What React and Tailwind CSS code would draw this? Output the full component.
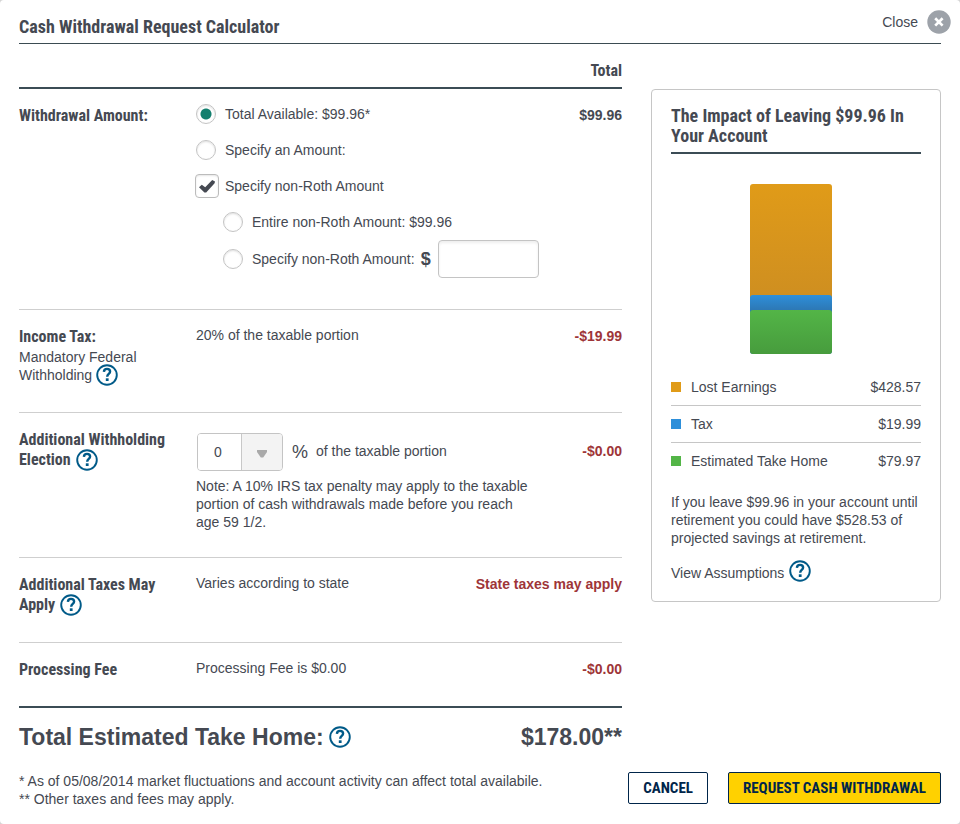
import React from "react";

const condensed = "font-['Roboto_Condensed','Arial_Narrow','Liberation_Sans_Narrow',sans-serif] font-bold";

function HelpButton({ topic, className = "" }) {
  return (
    <button type="button" aria-label={`Help: ${topic}`} className={`inline-block h-[22px] w-[22px] shrink-0 ${className}`}>
      <svg viewBox="0 0 22 22" className="h-full w-full" fill="none" stroke="#005a88">
        <circle cx="11" cy="11" r="9.8" strokeWidth="1.9" />
        <path d="M7.9 7.9C8 5.9 9.2 4.9 11 4.9c1.9 0 3.1 1 3.1 2.7 0 2.3-2.9 2.4-2.9 5.1" strokeWidth="2.4" />
        <path d="M11.2 14.3v2.7" strokeWidth="2.8" />
      </svg>
    </button>
  );
}

const radioStyle =
  "ml-px h-5 w-5 appearance-none rounded-full border border-[#c4c4c4] bg-white shadow-[inset_0_1px_2px_rgba(0,0,0,0.12)] checked:bg-[radial-gradient(circle,#137f6e_0_5px,#fff_6px)]";

function RadioOption({ name, children, defaultChecked, className = "" }) {
  return (
    <label className={`flex h-9 items-center ${className}`}>
      <span className="flex w-[30px] shrink-0">
        <input type="radio" name={name} defaultChecked={defaultChecked} className={radioStyle} />
      </span>
      <span>{children}</span>
    </label>
  );
}

function Row({ title, children, amount, negative = true, className = "border-b border-[#cfcfcf]" }) {
  return (
    <section className={`grid grid-cols-[176px_1fr_auto] ${className}`}>
      <div className="max-w-[160px] pt-[17px]">{title}</div>
      <div>{children}</div>
      <div className={`pt-4 text-right font-bold leading-5 ${negative ? "text-[#9e3538]" : ""}`}>{amount}</div>
    </section>
  );
}

function RowTitle({ children }) {
  return <h2 className={`${condensed} text-base leading-5`}>{children}</h2>;
}

const legend = [
  { label: "Lost Earnings", value: "$428.57", swatch: "bg-[#e09b18]" },
  { label: "Tax", value: "$19.99", swatch: "bg-[#2d8fda]" },
  { label: "Estimated Take Home", value: "$79.97", swatch: "bg-[#53b547]" },
];

export default function App() {
  return (
    <div className="min-h-screen bg-[#d4d4d4]">
      <div className="min-h-screen rounded bg-white px-[19px] pb-4 font-['Liberation_Sans',Arial,sans-serif] text-sm leading-[18px] text-[#454952]">
        <header className="flex h-11 items-center justify-between border-b border-[#3b4c52] pt-2">
          <h1 className={`${condensed} pt-[2px] text-lg leading-6`}>Cash Withdrawal Request Calculator</h1>
          <button type="button" className="-mr-[10px] mb-[7px] flex items-center gap-[9px]">
            Close
            <svg viewBox="0 0 24 24" className="h-6 w-6" aria-hidden="true">
              <circle cx="12" cy="12" r="11.7" fill="#9da2a9" />
              <path d="M8.2 8.2l7.4 7.4M15.6 8.2l-7.4 7.4" stroke="#fff" strokeWidth="2.7" />
            </svg>
          </button>
        </header>

        <main className="flex items-start gap-[29px]">
          <form className="min-w-0 flex-1">
            <div className={`${condensed} flex h-[45px] items-end justify-end border-b-2 border-[#3b4c55] pb-[6px] text-base leading-5`}>
              Total
            </div>

            <Row title={<RowTitle>Withdrawal Amount:</RowTitle>} amount="$99.96" negative={false} className="h-[221px] border-b border-[#cfcfcf]">
              <div className="pt-[7px]">
                <RadioOption name="amount" defaultChecked>Total Available: $99.96*</RadioOption>
                <RadioOption name="amount">Specify an Amount:</RadioOption>
                <label className="flex h-9 items-center">
                  <span className="grid w-[30px] shrink-0 items-center">
                    <input
                      type="checkbox"
                      defaultChecked
                      className="peer col-start-1 row-start-1 h-6 w-6 appearance-none rounded border border-[#bcbcbc] bg-white shadow-[inset_0_1px_2px_rgba(0,0,0,0.1)]"
                    />
                    <svg viewBox="0 0 24 24" className="pointer-events-none invisible col-start-1 row-start-1 h-6 w-6 peer-checked:visible" aria-hidden="true">
                      <path d="M4 13.2l2.8-2.4 3.4 2.4 7-7.2 2.8 1.4-.4 1.9-8.4 9.2h-1.8z" fill="#454952" />
                    </svg>
                  </span>
                  <span>Specify non-Roth Amount</span>
                </label>
                <RadioOption name="nonroth" className="pl-[27px]">Entire non-Roth Amount: $99.96</RadioOption>
                <div className="flex h-[38px] items-center">
                  <RadioOption name="nonroth" className="pl-[27px]">Specify non-Roth Amount:</RadioOption>
                  <label htmlFor="nonroth-value" className="pl-[6px] pr-[7px] text-lg font-bold">$</label>
                  <input
                    id="nonroth-value"
                    type="text"
                    className="h-[38px] w-[101px] rounded border border-[#c4c4c4] bg-white px-2 shadow-[inset_0_2px_3px_rgba(0,0,0,0.07)]"
                  />
                </div>
              </div>
            </Row>

            <Row
              title={
                <>
                  <RowTitle>Income Tax:</RowTitle>
                  <p className="pt-px">
                    Mandatory Federal
                    <span className="flex items-center gap-1">
                      Withholding <HelpButton topic="withholding" className="-my-[2px]" />
                    </span>
                  </p>
                </>
              }
              amount="-$19.99"
              className="h-[103px] border-b border-[#cfcfcf]"
            >
              <p className="pl-px pt-4">20% of the taxable portion</p>
            </Row>

            <Row
              title={
                <RowTitle>
                  Additional Withholding
                  <span className="flex h-5 items-center gap-[5px]">
                    Election <HelpButton topic="additional withholding" />
                  </span>
                </RowTitle>
              }
              amount={<span className="block pt-3">-$0.00</span>}
              className="h-[145px] border-b border-[#cfcfcf]"
            >
              <div className="flex items-center pl-[2px] pt-5">
                <div className="grid h-[38px] w-[86px] grid-cols-[44px_1fr] overflow-hidden rounded border border-[#c4c4c4]">
                  <select
                    aria-label="Additional withholding percentage"
                    className="col-span-2 col-start-1 row-start-1 appearance-none bg-[linear-gradient(90deg,#fff_43px,#c8c8c8_43px_44px,#f3f3f3_44px)] pl-4 pr-10"
                  >
                    <option>0</option>
                    <option>5</option>
                    <option>10</option>
                  </select>
                  <svg viewBox="0 0 12 8" className="pointer-events-none col-start-2 row-start-1 mt-1 h-2 w-3 place-self-center" aria-hidden="true">
                    <path d="M1 0h10v2L7.2 7.4H4.8L1 2z" fill="#a9a9a9" />
                  </svg>
                </div>
                <span className="pl-[9px] text-lg">%</span>
                <span className="pb-[2px] pl-2">of the taxable portion</span>
              </div>
              <p className="max-w-[336px] pl-px pt-[6px]">
                Note: A 10% IRS tax penalty may apply to the taxable portion of cash withdrawals made before you reach age 59 1/2.
              </p>
            </Row>

            <Row
              title={
                <RowTitle>
                  Additional Taxes May
                  <span className="flex h-5 items-center gap-[5px]">
                    Apply <HelpButton topic="state taxes" />
                  </span>
                </RowTitle>
              }
              amount="State taxes may apply"
              className="h-[85px] border-b border-[#cfcfcf]"
            >
              <p className="pl-px pt-4">Varies according to state</p>
            </Row>

            <Row title={<RowTitle>Processing Fee</RowTitle>} amount="-$0.00" className="h-[65px] border-b-2 border-[#3b4c55]">
              <p className="pl-px pt-4">Processing Fee is $0.00</p>
            </Row>

            <div className="flex items-center justify-between pt-[14px] text-[23px] font-bold leading-[30px]">
              <span className="flex items-center gap-[5px]">
                Total Estimated Take Home: <HelpButton topic="estimated take home" />
              </span>
              <span>$178.00**</span>
            </div>
          </form>

          <aside className="mt-[45px] w-[290px] shrink-0 rounded border border-[#c6c6c6] px-[19px] pb-[19px] pt-4">
            <h2 className={`${condensed} border-b-2 border-[#3b4c55] pb-[6px] text-lg leading-5`}>
              The Impact of Leaving $99.96 In Your Account
            </h2>
            <div className="mb-[15px] ml-[79px] mt-[30px] w-[82px] overflow-hidden rounded-[3px]" role="img" aria-label="Lost earnings, tax and estimated take home">
              <div className="h-[111px] bg-linear-to-b from-[#e09b18] to-[#cf8f20]" />
              <div className="bg-[#cf8f20]">
                <div className="h-[15px] rounded-t-[3px] bg-linear-to-b from-[#2d8fda] to-[#2d78b5]" />
              </div>
              <div className="bg-[#2d78b5]">
                <div className="h-11 rounded-t-[3px] bg-linear-to-b from-[#53b547] to-[#479c3d]" />
              </div>
            </div>
            <dl>
              {legend.map((item) => (
                <div key={item.label} className="flex h-[37px] items-center border-b border-[#c6c6c6] last:border-transparent">
                  <dt className="flex flex-1 items-center gap-[10px]">
                    <span className={`h-[10px] w-[10px] ${item.swatch}`} />
                    {item.label}
                  </dt>
                  <dd>{item.value}</dd>
                </div>
              ))}
            </dl>
            <p className="pt-[13px]">
              If you leave $99.96 in your account until retirement you could have $528.53 of projected savings at retirement.
            </p>
            <div className="flex items-center gap-[5px] pt-[13px]">
              <a href="#assumptions" className="pt-1">View Assumptions</a>
              <HelpButton topic="assumptions" />
            </div>
          </aside>
        </main>

        <footer className="flex items-start justify-between pt-5">
          <p>
            * As of 05/08/2014 market fluctuations and account activity can affect total availabile.
            <br />
            ** Other taxes and fees may apply.
          </p>
          <div className={`${condensed} flex gap-5 text-[15px] text-[#00254a]`}>
            <button type="button" className="h-8 rounded-xs border border-[#00254a] bg-white px-[14px]">CANCEL</button>
            <button type="button" className="h-8 rounded-xs border border-[#00254a] bg-[#ffd100] px-[14px]">REQUEST CASH WITHDRAWAL</button>
          </div>
        </footer>
      </div>
    </div>
  );
}
